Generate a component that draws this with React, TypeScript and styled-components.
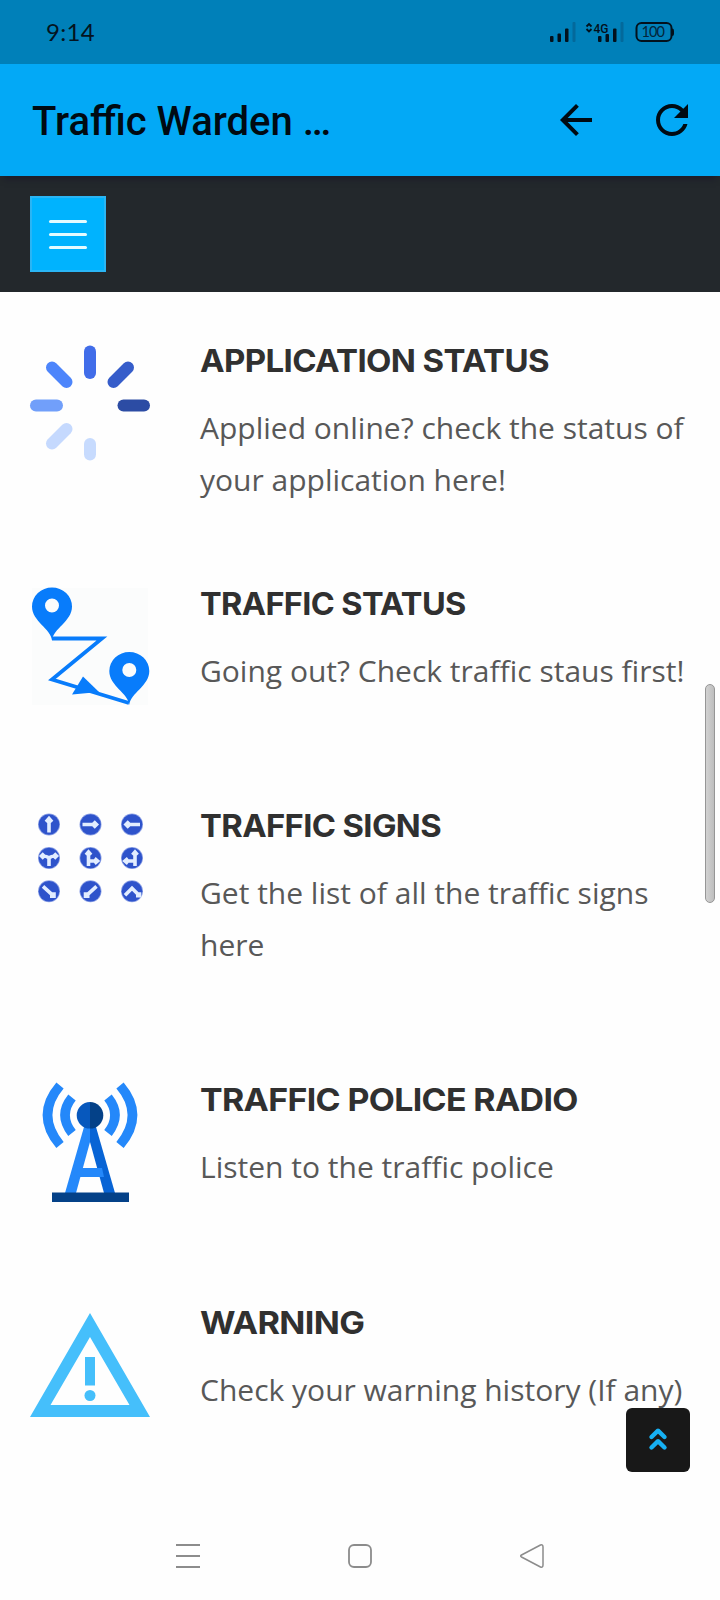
import React from "react";
import styled, { createGlobalStyle } from "styled-components";

const GlobalStyle = createGlobalStyle`
  * { box-sizing: border-box; }
  body { margin: 0; background: #fefefe; }
`;

const Screen = styled.div`
  position: relative;
  display: flex;
  flex-direction: column;
  width: 720px;
  height: 1600px;
  overflow: hidden;
  background: #fefefe;
  font-family: "Open Sans", sans-serif;
`;

const StatusBar = styled.header`
  display: flex;
  align-items: center;
  justify-content: space-between;
  height: 64px;
  padding: 0 44px 0 46px;
  background: #0080b9;
`;

const Clock = styled.span`
  padding-bottom: 1px;
  font: 400 24px/30px Lato, sans-serif;
  letter-spacing: 0.3px;
  color: #04141f;
`;

const AppBar = styled.div`
  position: relative;
  z-index: 1;
  display: flex;
  align-items: center;
  height: 112px;
  padding: 0 24px 0 32px;
  background: #03a9f6;
  box-shadow: 0 7px 6px -4px rgba(20, 16, 40, 0.5);
`;

const AppTitle = styled.h1`
  flex: 1;
  margin: 0;
  padding-top: 3px;
  font: 500 40px/48px Roboto, sans-serif;
  color: #000a12;
`;

const BarActions = styled.div`
  display: flex;
  gap: 48px;
`;

const BarButton = styled.button`
  display: flex;
  padding: 0;
  border: 0;
  background: none;
`;

const SiteHeader = styled.nav`
  display: flex;
  align-items: center;
  height: 116px;
  padding-left: 30px;
  background: #23282c;
`;

const MenuButton = styled.button`
  display: flex;
  flex-direction: column;
  align-items: center;
  justify-content: center;
  gap: 10px;
  width: 76px;
  height: 76px;
  padding: 0;
  border: 2px solid #2ab5f4;
  background: #00b3fe;
`;

const MenuLine = styled.span`
  width: 38px;
  height: 3px;
  border-radius: 1.5px;
  background: #e4fbff;
`;

const Services = styled.main`
  display: flex;
  flex-direction: column;
  flex: 1;
  padding: 48px 0 0 30px;
`;

const Service = styled.section<{ $height: number }>`
  display: flex;
  gap: 50px;
  height: ${(p) => p.$height}px;
`;

const Picture = styled.svg`
  flex: none;
  width: 120px;
  height: 120px;
  margin-top: 4px;
  overflow: visible;
`;

const Copy = styled.div`
  flex: 1;
  padding-top: 1px;
  white-space: pre-line;
`;

const ServiceTitle = styled.h2<{ $stretch: number }>`
  margin: 0 0 21px;
  font: 700 31.5px/40px Inter, "Open Sans", sans-serif;
  letter-spacing: -0.6px;
  color: #303030;
  transform: scaleX(${(p) => p.$stretch});
  transform-origin: left;
`;

const ServiceText = styled.p`
  margin: 0;
  font-size: 30px;
  line-height: 52px;
  color: #585858;
`;

const ScrollThumb = styled.div`
  position: absolute;
  top: 684px;
  left: 705px;
  width: 10px;
  height: 219px;
  border: 1px solid #969696;
  border-radius: 5px;
  background: linear-gradient(90deg, #d2d2d2, #bebebe);
`;

const TopButton = styled.button`
  position: absolute;
  top: 1408px;
  left: 626px;
  display: flex;
  align-items: center;
  justify-content: center;
  width: 64px;
  height: 64px;
  padding: 0 0 3px;
  border: 0;
  border-radius: 6px;
  background: #181818;
`;

const SystemNav = styled.footer`
  display: flex;
  align-items: center;
  justify-content: center;
  gap: 148px;
  height: 88px;
`;

const SpinnerPicture = () => (
  <Picture viewBox="0 0 120 120" fill="none" strokeWidth="12" strokeLinecap="round">
    <path d="M60 7.500V29" stroke="#416de9" />
    <path d="M98 23.500L83.500 38" stroke="#365dca" />
    <path d="M114 61.500H93.500" stroke="#2c4ca4" />
    <path d="M22 23.500L36.500 38" stroke="#4d85fb" />
    <path d="M6 61.500H27" stroke="#719ffa" />
    <path d="M36.500 85L22 99.500" stroke="#c5d9fe" />
    <path d="M60 100V110.500" stroke="#c7dbfe" />
  </Picture>
);

const pin =
  "M0 53C-1 41-20 34-20 19A20 19 0 0 1 20 19C20 34 1 41 0 53ZM0 11a7 7 0 1 0 0 14a7 7 0 1 0 0-14Z";

const RoutePicture = () => (
  <Picture viewBox="0 0 120 120">
    <rect width="116" height="117" x="2" y="1" fill="#fbfcfc" />
    <path d="M22 51.500H72L22 92.500L99 116" fill="none" stroke="#087cfb" strokeWidth="3.800" />
    <path d="M53 89.500L69 105L42 107.500Z" fill="#087cfb" />
    <path transform="translate(22 0.500)" d={pin} fill="#087cfb" fillRule="evenodd" />
    <path transform="translate(99.300 65)" d={pin} fill="#087cfb" fillRule="evenodd" />
  </Picture>
);

const signArrows = [
  "M0 8V-6M-3-2.500L0-6L3-2.500",
  "M-8 0H6M3-3L6 0L3 3",
  "M8 0H-6M-3-3L-6 0L-3 3",
  "M0 8V0Q-2-2-7-2M0 0Q2-2 7-2M-5-4.500L-7.500-2L-5 .5M5-4.500L7.500-2L5 .5",
  "M-2 8V-6M-4.500-3L-2-6L.5-3M-2 3H7M4 .5L7 3L4 5.500",
  "M3 8V-6M.5-3L3-6L5.500-3M3 3H-7M-4 .5L-7 3L-4 5.500",
  "M-6-5L5 5M1 5H5V1",
  "M6-5L-5 5M-1 5H-5V1",
  "M-7 4L0-3L7 4M4 4.500H7.500V1",
];

const SignsPicture = () => (
  <Picture viewBox="0 0 120 120">
    {signArrows.map((d, i) => (
      <g key={i} transform={`translate(${[19, 60.500, 102][i % 3]} ${[15.500, 49, 82.300][Math.floor(i / 3)]})`}>
        <circle r="11" fill="#8fa3e6" />
        <circle r="10.300" fill="#2e53cb" />
        <path d={d} fill="none" stroke="#e2edff" strokeWidth="3.600" />
      </g>
    ))}
  </Picture>
);

const RadioPicture = () => (
  <Picture viewBox="0 1 120 120">
    <g fill="none" stroke="#2488fa" strokeWidth="9.500">
      <path d="M30 3.500Q5 33 30 63" />
      <path d="M42 15.500Q28 33 42 51" />
      <path d="M90 3.500Q115 33 90 63" />
      <path d="M78 15.500Q92 33 78 51" />
    </g>
    <path d="M54 45H60V60L46 111H35Z" fill="#2488fa" />
    <path d="M60 45H66L85 111H74L60 60Z" fill="#0864d5" />
    <path d="M48 86H60V95H46Z" fill="#2488fa" />
    <path d="M60 86H72L74 95H60Z" fill="#2488fa" />
    <path d="M60 20A13.300 13.300 0 0 0 60 46.600Z" fill="#0758bd" />
    <path d="M60 20A13.300 13.300 0 0 1 60 46.600Z" fill="#044188" />
    <path d="M22 110.500H99V120H22Z" fill="#044188" />
  </Picture>
);

const WarningPicture = () => (
  <Picture viewBox="0 1 120 120">
    <path d="M60 8L120 112H0ZM60 32L20.500 100H99.500Z" fill="#45bffb" fillRule="evenodd" />
    <path d="M55 52H65V80.500H55Z" fill="#45bffb" />
    <circle cx="60" cy="90.500" r="5.500" fill="#45bffb" />
  </Picture>
);

const services = [
  { title: "APPLICATION STATUS", text: "Applied online? check the status of\nyour application here!", height: 243, stretch: 1.047, Art: SpinnerPicture },
  { title: "TRAFFIC STATUS", text: "Going out? Check traffic staus first!", height: 222, stretch: 1.031, Art: RoutePicture },
  { title: "TRAFFIC SIGNS", text: "Get the list of all the traffic signs\nhere", height: 274, stretch: 1.04, Art: SignsPicture },
  { title: "TRAFFIC POLICE RADIO", text: "Listen to the traffic police", height: 223, stretch: 1.076, Art: RadioPicture },
  { title: "WARNING", text: "Check your warning history (If any)", height: 200, stretch: 1.088, Art: WarningPicture },
];

const StatusIcons = () => (
  <svg width="128" height="24" viewBox="548 20 128 24">
    <g fill="#03111c">
      <rect x="550" y="36" width="3.500" height="6" rx="1" />
      <rect x="557.500" y="33.500" width="3.500" height="8.500" rx="1" />
      <rect x="565" y="28.500" width="3.500" height="13.500" rx="1" />
      <rect x="598" y="36" width="3.500" height="6" rx="1" />
      <rect x="605.500" y="34" width="3.500" height="8" rx="1" />
      <rect x="613" y="28.500" width="3.500" height="13.500" rx="1" />
      <path d="M672 28.500q2 0 2 2v3.500q0 2-2 2z" />
    </g>
    <g fill="#03699b">
      <rect x="572.500" y="22" width="3" height="20" rx="1" />
      <rect x="620.500" y="22" width="3" height="20" rx="1" />
    </g>
    <path d="M586.500 26.500L589 24L591.500 26.500M586.500 29L589 31.500L591.500 29" fill="none" stroke="#03111c" strokeWidth="1.800" />
    <text x="593.500" y="32.500" fontFamily="Roboto, sans-serif" fontSize="13" fontWeight="500" textLength="15" lengthAdjust="spacingAndGlyphs" fill="#03111c">4G</text>
    <rect x="636.500" y="23" width="35" height="18" rx="5" fill="none" stroke="#03111c" strokeWidth="2" />
    <text x="641.500" y="36.800" fontFamily="Lato, sans-serif" fontSize="14.500" textLength="23.500" fill="#03253a">100</text>
  </svg>
);

export default function App() {
  return (
    <Screen>
      <GlobalStyle />
      <StatusBar>
        <Clock>9:14</Clock>
        <StatusIcons />
      </StatusBar>
      <AppBar>
        <AppTitle>Traffic Warden …</AppTitle>
        <BarActions>
          <BarButton aria-label="Back">
            <svg width="48" height="48" viewBox="0 0 24 24" fill="#000a12">
              <path d="M20 11H7.830l5.590-5.590L12 4l-8 8 8 8 1.410-1.410L7.830 13H20v-2z" />
            </svg>
          </BarButton>
          <BarButton aria-label="Reload">
            <svg width="48" height="48" viewBox="0 0 24 24" fill="#000a12">
              <path d="M17.650 6.350C16.200 4.900 14.210 4 12 4c-4.420 0-7.990 3.580-7.990 8s3.570 8 7.990 8c3.730 0 6.840-2.550 7.730-6h-2.080c-.82 2.330-3.040 4-5.650 4-3.310 0-6-2.690-6-6s2.690-6 6-6c1.660 0 3.140.69 4.220 1.780L13 11h7V4l-2.350 2.350z" />
            </svg>
          </BarButton>
        </BarActions>
      </AppBar>
      <SiteHeader>
        <MenuButton aria-label="Menu">
          <MenuLine />
          <MenuLine />
          <MenuLine />
        </MenuButton>
      </SiteHeader>
      <Services>
        {services.map(({ title, text, height, stretch, Art }) => (
          <Service key={title} $height={height}>
            <Art />
            <Copy>
              <ServiceTitle $stretch={stretch}>{title}</ServiceTitle>
              <ServiceText>{text}</ServiceText>
            </Copy>
          </Service>
        ))}
      </Services>
      <SystemNav>
        <svg width="24" height="24" viewBox="0 0 24 24" fill="none" stroke="#8c8c8c" strokeWidth="2">
          <path d="M0 1H24M0 12H24M0 23H24" />
        </svg>
        <svg width="24" height="24" viewBox="0 0 24 24" fill="none" stroke="#8c8c8c" strokeWidth="1.800">
          <rect x="1" y="1" width="22" height="22" rx="5" />
        </svg>
        <svg width="24" height="24" viewBox="0 0 24 24" fill="none" stroke="#8c8c8c" strokeWidth="1.500" strokeLinejoin="round">
          <path d="M20.500 1Q23 .3 23 3V21Q23 23.700 20.500 23L1.500 13Q-.2 12 1.500 11Z" />
        </svg>
      </SystemNav>
      <ScrollThumb />
      <TopButton aria-label="Back to top">
        <svg width="20" height="24" viewBox="0 0 20 24" fill="none" stroke="#16b0f3" strokeWidth="4.400" strokeLinecap="round" strokeLinejoin="round">
          <path d="M3.500 10L10 3.700L16.500 10M3.500 20.500L10 14.200L16.500 20.500" />
        </svg>
      </TopButton>
    </Screen>
  );
}
